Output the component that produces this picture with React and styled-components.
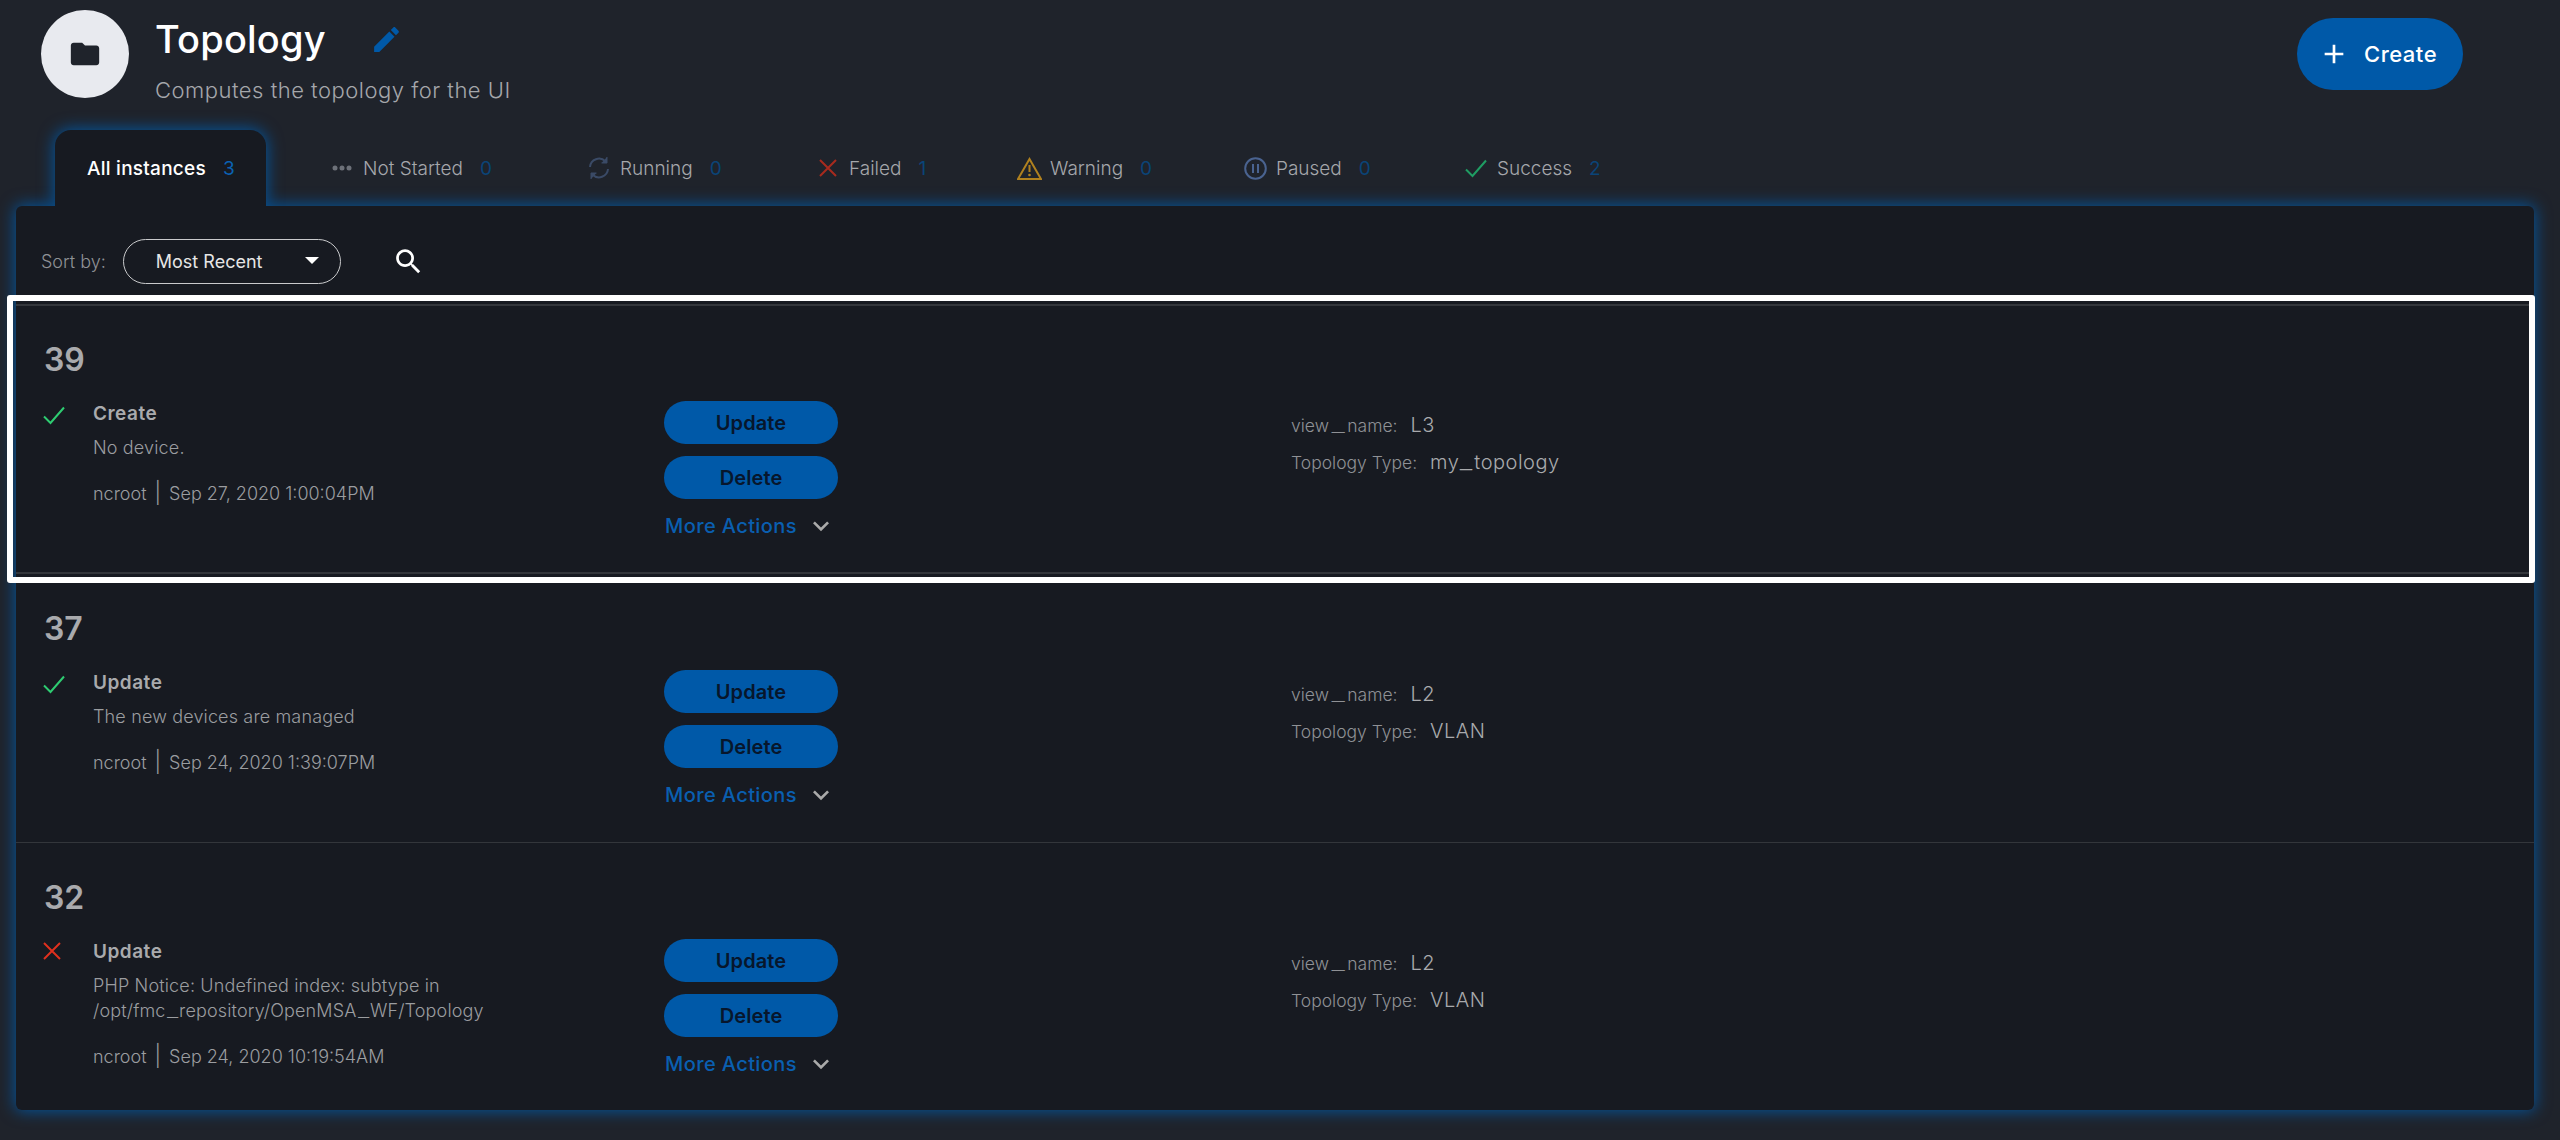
import React from "react";
import styled, { createGlobalStyle } from "styled-components";

const Global = createGlobalStyle`
  html, body {
    margin: 0;
    padding: 0;
    background: #1f232b;
  }
  * {
    box-sizing: border-box;
  }
`;

const Page = styled.div`
  width: 2560px;
  height: 1140px;
  overflow: hidden;
  padding: 10px 26px 0 16px;
  background: #1f232b;
  font-family: Inter, Roboto, "Liberation Sans", sans-serif;
`;

const Header = styled.header`
  display: flex;
  align-items: flex-start;
  height: 88px;
  padding: 0 71px 0 25px;
`;

const Avatar = styled.div`
  width: 88px;
  height: 88px;
  flex: none;
  border-radius: 50%;
  background: #e8eaef;
  color: #1f232b;
  display: flex;
  align-items: center;
  justify-content: center;
`;

const TitleBlock = styled.div`
  margin-left: 26px;
  flex: 1;
`;

const TitleRow = styled.div`
  display: flex;
  align-items: center;
  gap: 44px;
  height: 48px;
  margin-top: 5px;
`;

const Title = styled.h1`
  margin: 0;
  font-size: 38px;
  font-weight: 500;
  letter-spacing: 0.2px;
  color: #fff;
`;

const Subtitle = styled.p`
  margin: 14px 0 0;
  font-size: 22px;
  font-weight: 300;
  letter-spacing: 0.5px;
  color: #a5a7ab;
`;

const CreateButton = styled.button`
  width: 166px;
  height: 72px;
  margin-top: 8px;
  padding: 0 0 0 21px;
  border: 0;
  border-radius: 36px;
  background: #0059a8;
  color: #fff;
  display: flex;
  align-items: center;
  gap: 14px;
  font: 500 22px Inter, sans-serif;
  letter-spacing: 0.5px;
`;

const Tabs = styled.nav`
  display: grid;
  grid-template-columns: 244px 257px 229px 201px 226px 221px auto;
  height: 76px;
  margin: 32px 0 0 39px;
`;

const Tab = styled.div`
  position: relative;
  z-index: 2;
  display: flex;
  align-items: center;
  height: 76px;
  padding: 0 32px;
  white-space: nowrap;
  font-size: 19px;
  font-weight: ${(p) => (p.$active ? 500 : 300)};
  color: ${(p) => (p.$active ? "#fff" : "#a5a7ab")};
  ${(p) =>
    p.$active &&
    `
    width: 211px;
    letter-spacing: 0.25px;
    background: #171a21;
    border-radius: 16px 16px 0 0;
    box-shadow: 0 0 16px 1px rgba(0, 91, 170, 0.9);
    clip-path: inset(-20px -20px 0 -20px);
  `}
`;

const TabIcon = styled.span`
  display: flex;
  align-items: center;
  justify-content: center;
  width: 22px;
  margin-right: 10px;
  svg {
    flex: none;
  }
`;

const Count = styled.span`
  margin-left: 17px;
  font-weight: 400;
  color: ${(p) => (p.$active ? "#0a62b4" : "#0a4478")};
`;

const Panel = styled.main`
  position: relative;
  z-index: 1;
  width: 2518px;
  height: 904px;
  border-radius: 6px;
  background: #171a21;
  box-shadow: 0 0 16px 1px rgba(0, 91, 170, 0.9);
`;

const SortBar = styled.div`
  display: flex;
  align-items: center;
  height: 99px;
  padding: 12px 0 0 25px;
  border-bottom: 1px solid #33363b;
`;

const SortLabel = styled.span`
  font-size: 18px;
  font-weight: 300;
  color: #8f9195;
`;

const Select = styled.div`
  position: relative;
  display: flex;
  align-items: center;
  width: 218px;
  height: 45px;
  margin: 0 51px 0 17px;
  padding-left: 32px;
  border: 1px solid #c9cacc;
  border-radius: 23px;
  font-size: 18px;
  color: #e6e6e6;
`;

const Caret = styled.span`
  position: absolute;
  right: 21px;
  top: 17px;
  border-left: 7px solid transparent;
  border-right: 7px solid transparent;
  border-top: 7px solid #fff;
`;

const Row = styled.section`
  position: relative;
  display: grid;
  grid-template-columns: 648px 627px 1fr;
  height: ${(p) => p.$height}px;
  padding-top: 39px;
  border-bottom: ${(p) => (p.$last ? "0" : "1px solid #33363b")};
`;

const Highlight = styled.div`
  position: absolute;
  top: -10px;
  left: -9px;
  right: -1px;
  bottom: -10px;
  border: 6px solid #fff;
  border-radius: 3px;
  pointer-events: none;
  &::before,
  &::after {
    content: "";
    position: absolute;
    left: 3px;
    right: 0;
    height: 2px;
    background: #33363b;
  }
  &::before {
    top: 3px;
  }
  &::after {
    bottom: 3px;
  }
`;

const Summary = styled.div`
  padding-left: 28px;
`;

const RowId = styled.div`
  font-size: 32px;
  line-height: 32px;
  font-weight: 600;
  color: #a9aaad;
`;

const Status = styled.div`
  display: grid;
  grid-template-columns: 49px 1fr;
  margin-top: 26px;
`;

const StatusIcon = styled.div`
  padding-top: 2px;
  margin-left: -1px;
`;

const ProcessName = styled.div`
  font-size: 19px;
  line-height: 24px;
  font-weight: 600;
  letter-spacing: 0.5px;
  color: #a9aaad;
`;

const Message = styled.div`
  margin-top: 9px;
  font-size: 18px;
  line-height: 25px;
  font-weight: 300;
  letter-spacing: 0.15px;
  color: #9b9da0;
`;

const Meta = styled.div`
  margin-top: 21px;
  font-size: 18px;
  line-height: 25px;
  font-weight: 300;
  color: #9b9da0;
`;

const MetaBar = styled.span`
  margin: 0 8px;
  font-size: 21px;
  line-height: 0;
`;

const Actions = styled.div`
  display: flex;
  flex-direction: column;
  align-items: flex-start;
  gap: 12px;
  padding-top: 57px;
`;

const ActionButton = styled.button`
  width: 174px;
  height: 43px;
  border: 0;
  border-radius: 22px;
  background: #0059a8;
  color: #07162c;
  font: 600 20px Inter, sans-serif;
  letter-spacing: 0.1px;
`;

const MoreActions = styled.div`
  display: flex;
  align-items: center;
  gap: 8px;
  margin-top: -1px;
  padding-left: 1px;
  font-size: 20px;
  font-weight: 500;
  letter-spacing: 0.4px;
  color: #0a5fb0;
`;

const Params = styled.div`
  display: flex;
  flex-direction: column;
  gap: 11px;
  padding-top: 69px;
`;

const Param = styled.div`
  display: flex;
  align-items: baseline;
  gap: 13px;
  height: 26px;
`;

const ParamLabel = styled.span`
  font-size: 17.5px;
  font-weight: 300;
  color: #8f9195;
`;

const ParamValue = styled.span`
  font-size: 20px;
  font-weight: 300;
  letter-spacing: 0.5px;
  color: #a9aaad;
`;

const Wide = styled.span`
  display: inline-block;
  width: 0.75em;
  text-align: center;
  transform: scaleX(1.4);
  ${ParamLabel} & {
    width: 1.05em;
    transform: scaleX(1.7);
  }
`;

// the underscore of the original font is a lot wider than Inter's
const Snake = ({ text }) =>
  text.split("_").map((part, i) => (
    <React.Fragment key={i}>
      {i > 0 && <Wide>_</Wide>}
      {part}
    </React.Fragment>
  ));

const Icon = ({ d, size = 24, color = "currentColor" }) => (
  <svg width={size} height={size} viewBox="0 0 24 24" fill={color}>
    <path d={d} />
  </svg>
);

const paths = {
  folder: "M10 4H4c-1.1 0-1.99.9-1.99 2L2 18c0 1.1.9 2 2 2h16c1.1 0 2-.9 2-2V8c0-1.1-.9-2-2-2h-8l-2-2z",
  edit: "M3 17.25V21h3.75L17.81 9.94l-3.75-3.75L3 17.25zM20.71 7.04c.39-.39.39-1.02 0-1.41l-2.34-2.34c-.39-.39-1.02-.39-1.41 0l-1.83 1.83 3.75 3.75 1.83-1.83z",
  search: "M15.5 14h-.79l-.28-.27C15.41 12.59 16 11.11 16 9.5 16 5.91 13.09 3 9.5 3S3 5.91 3 9.5 5.91 16 9.5 16c1.61 0 3.09-.59 4.23-1.57l.27.28v.79l5 4.99L20.49 19l-4.99-5zm-6 0C7.01 14 5 11.99 5 9.5S7.01 5 9.5 5 14 7.01 14 9.5 11.99 14 9.5 14z",
  chevron: "M16.59 8.59L12 13.17 7.41 8.59 6 10l6 6 6-6z",
  plus: "M19 13h-6v6h-2v-6H5v-2h6V5h2v6h6v2z",
};

const Check = ({ size = 22, color }) => (
  <svg width={size} height={size} viewBox="0 0 22 22" fill="none" stroke={color} strokeWidth="2">
    <path d="M1 12.5 L7.5 19 L21 3.5" />
  </svg>
);

const Cross = ({ size = 18, color }) => (
  <svg width={size} height={size} viewBox="0 0 18 18" fill="none" stroke={color} strokeWidth="2">
    <path d="M1 1 L17 17 M17 1 L1 17" />
  </svg>
);

const Dots = () => (
  <svg width="20" height="6" viewBox="0 0 20 6" fill="#6d7179">
    <circle cx="3" cy="3" r="2.5" />
    <circle cx="10" cy="3" r="2.5" />
    <circle cx="17" cy="3" r="2.5" />
  </svg>
);

const Refresh = () => (
  <svg width="22" height="24" viewBox="0 0 22 24" fill="none" stroke="#3a4a66" strokeWidth="2">
    <path d="M2 11 A9 9 0 0 1 17.5 5.5" />
    <path d="M20 13 A9 9 0 0 1 4.5 18.5" />
    <path d="M19 1 V7 H13.5" fill="#3a4a66" strokeWidth="1" />
    <path d="M3 23 V17 H8.5" fill="#3a4a66" strokeWidth="1" />
  </svg>
);

const Warning = () => (
  <svg width="25" height="23" viewBox="0 0 25 23" fill="none" stroke="#b0811f" strokeWidth="2">
    <path d="M12.5 2 L24 22 H1 Z" />
    <path d="M12.5 8 V15" />
    <circle cx="12.5" cy="18" r="1.3" fill="#b0811f" stroke="none" />
  </svg>
);

const Pause = () => (
  <svg width="23" height="23" viewBox="0 0 23 23" fill="none" stroke="#4a6390" strokeWidth="2">
    <circle cx="11.5" cy="11.5" r="10.3" />
    <path d="M9 7 V16 M14 7 V16" />
  </svg>
);

const tabs = [
  { label: "All instances", count: 3, active: true },
  { label: "Not Started", count: 0, icon: <Dots /> },
  { label: "Running", count: 0, icon: <Refresh /> },
  { label: "Failed", count: 1, icon: <Cross color="#a82a1e" /> },
  { label: "Warning", count: 0, icon: <Warning /> },
  { label: "Paused", count: 0, icon: <Pause /> },
  { label: "Success", count: 2, icon: <Check color="#1f9d63" /> },
];

const rows = [
  {
    id: 39,
    ok: true,
    name: "Create",
    message: ["No device."],
    user: "ncroot",
    date: "Sep 27, 2020 1:00:04PM",
    view: "L3",
    type: "my_topology",
    height: 269,
    selected: true,
  },
  {
    id: 37,
    ok: true,
    name: "Update",
    message: ["The new devices are managed"],
    user: "ncroot",
    date: "Sep 24, 2020 1:39:07PM",
    view: "L2",
    type: "VLAN",
    height: 269,
  },
  {
    id: 32,
    ok: false,
    name: "Update",
    message: ["PHP Notice: Undefined index: subtype in", "/opt/fmc_repository/OpenMSA_WF/Topology"],
    user: "ncroot",
    date: "Sep 24, 2020 10:19:54AM",
    view: "L2",
    type: "VLAN",
    height: 267,
    last: true,
  },
];

const App = () => (
  <Page>
    <Global />
    <Header>
      <Avatar>
        <Icon d={paths.folder} size={34} />
      </Avatar>
      <TitleBlock>
        <TitleRow>
          <Title>Topology</Title>
          <Icon d={paths.edit} size={33} color="#0059a8" />
        </TitleRow>
        <Subtitle>Computes the topology for the UI</Subtitle>
      </TitleBlock>
      <CreateButton>
        <Icon d={paths.plus} size={32} />
        Create
      </CreateButton>
    </Header>

    <Tabs>
      {tabs.map((tab) => (
        <Tab key={tab.label} $active={tab.active}>
          {tab.icon && <TabIcon>{tab.icon}</TabIcon>}
          {tab.label}
          <Count $active={tab.active}>{tab.count}</Count>
        </Tab>
      ))}
    </Tabs>

    <Panel>
      <SortBar>
        <SortLabel>Sort by:</SortLabel>
        <Select>
          Most Recent
          <Caret />
        </Select>
        <Icon d={paths.search} size={33} color="#fff" />
      </SortBar>

      {rows.map((row) => (
        <Row key={row.id} $height={row.height} $last={row.last}>
          {row.selected && <Highlight />}
          <Summary>
            <RowId>{row.id}</RowId>
            <Status>
              <StatusIcon>
                {row.ok ? <Check color="#2ecc71" /> : <Cross color="#e0301e" />}
              </StatusIcon>
              <div>
                <ProcessName>{row.name}</ProcessName>
                <Message>
                  {row.message.map((line) => (
                    <div key={line}>
                      <Snake text={line} />
                    </div>
                  ))}
                </Message>
                <Meta>
                  {row.user}
                  <MetaBar>|</MetaBar>
                  {row.date}
                </Meta>
              </div>
            </Status>
          </Summary>
          <Actions>
            <ActionButton>Update</ActionButton>
            <ActionButton>Delete</ActionButton>
            <MoreActions>
              More Actions
              <Icon d={paths.chevron} size={32} color="#aaa" />
            </MoreActions>
          </Actions>
          <Params>
            <Param>
              <ParamLabel>
                <Snake text="view_name:" />
              </ParamLabel>
              <ParamValue>{row.view}</ParamValue>
            </Param>
            <Param>
              <ParamLabel>Topology Type:</ParamLabel>
              <ParamValue>
                <Snake text={row.type} />
              </ParamValue>
            </Param>
          </Params>
        </Row>
      ))}
    </Panel>
  </Page>
);

export default App;
